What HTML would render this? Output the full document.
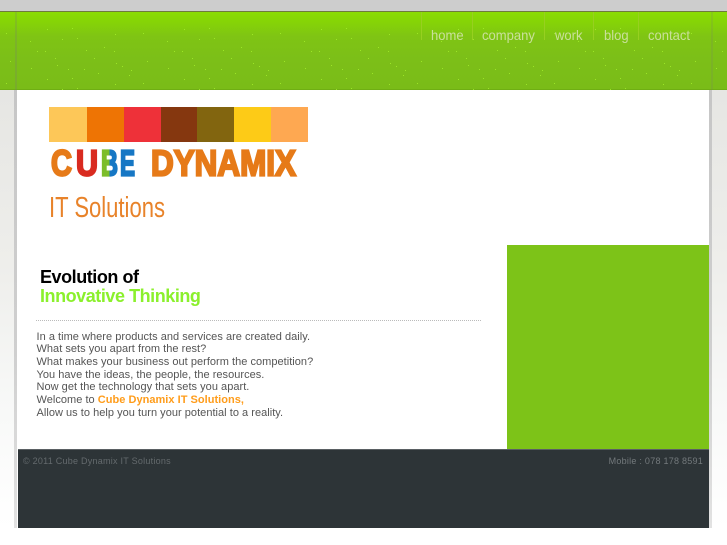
<!DOCTYPE html>
<html><head><meta charset="utf-8">
<style>
html,body{margin:0;padding:0;width:727px;height:545px;overflow:hidden;background:#fff;font-family:"Liberation Sans",sans-serif}
.a{position:absolute}
#wrap{position:relative;width:727px;height:545px;overflow:hidden}
.t{position:absolute;white-space:nowrap}
.nav{position:absolute;top:27px;font-size:14px;line-height:16px;color:#c9e09a;white-space:nowrap;transform-origin:left top;transform:scaleX(.93)}
.sep{position:absolute;top:12px;width:1px;height:28px;background:#97d020}
#copy{left:36.5px;top:330.5px;font-size:11px;line-height:12.68px;color:#555;letter-spacing:.03px;white-space:nowrap}
</style></head><body><div id="wrap">
<div class="a" style="left:0;top:90px;width:15px;height:438px;background:linear-gradient(180deg,#e6e6e3 0%,#eeeeeb 40%,#f7f8f7 70%,#fff 100%)"></div>
<div class="a" style="left:712px;top:90px;width:15px;height:438px;background:linear-gradient(180deg,#e6e6e3 0%,#eeeeeb 40%,#f7f8f7 70%,#fff 100%)"></div>
<div class="a" style="left:14px;top:90px;width:3px;height:438px;background:linear-gradient(180deg,#c6c6c6,#cfcfcf 60%,#e2e2e2)"></div>
<div class="a" style="left:709px;top:90px;width:3px;height:438px;background:linear-gradient(180deg,#c6c6c6,#cfcfcf 60%,#e2e2e2)"></div>

<div class="a" style="left:0;top:0;width:727px;height:11px;background:#cdcdcd"></div>
<div class="a" style="left:0;top:11px;width:727px;height:1px;background:#6f7a3e"></div>
<div class="a" style="left:0;top:12px;width:727px;height:78px;background:linear-gradient(180deg,#8bdc03 0%,#86d406 12%,#7fc414 32%,#7cbf18 60%,#7abc18 100%)"></div>
<div class="a" style="left:0;top:89px;width:727px;height:1px;background:#6fae14"></div>
<svg class="a" style="left:0;top:12px" width="727" height="78">
<defs><pattern id="p" width="137" height="50" patternUnits="userSpaceOnUse" y="26">
<g fill="#a4f02a" fill-opacity=".8">
<rect x="30" y="3" width="1" height="1"/><rect x="62" y="1" width="1" height="1"/><rect x="77" y="0" width="1" height="1"/><rect x="37" y="13" width="1" height="1"/><rect x="45" y="13" width="1" height="1"/><rect x="86" y="12" width="1" height="1"/><rect x="104" y="9" width="1" height="1"/><rect x="114" y="13" width="1" height="1"/><rect x="55" y="20" width="1" height="1"/><rect x="94" y="20" width="1" height="1"/><rect x="10" y="23" width="1" height="1"/><rect x="57" y="27" width="1" height="1"/><rect x="31" y="30" width="1" height="1"/><rect x="68" y="31" width="1" height="1"/><rect x="84" y="31" width="1" height="1"/><rect x="122" y="28" width="1" height="1"/><rect x="116" y="25" width="1" height="1"/><rect x="131" y="32" width="1" height="1"/><rect x="6" y="45" width="1" height="1"/><rect x="47" y="41" width="1" height="1"/><rect x="72" y="40" width="1" height="1"/><rect x="115" y="46" width="1" height="1"/><rect x="129" y="37" width="1" height="1"/><rect x="98" y="35" width="1" height="1"/>
</g></pattern></defs>
<rect x="0" y="14" width="727" height="64" fill="url(#p)"/>
</svg>
<div class="a" style="left:15px;top:12px;width:2px;height:78px;background:rgba(120,120,120,.22)"></div>
<div class="a" style="left:711px;top:12px;width:2px;height:78px;background:rgba(120,120,120,.16)"></div>

<div class="sep" style="left:421px"></div><div class="sep" style="left:472px"></div><div class="sep" style="left:544px"></div><div class="sep" style="left:593px"></div><div class="sep" style="left:638px"></div>
<div class="nav" style="left:431px">home</div>
<div class="nav" style="left:481.5px">company</div>
<div class="nav" style="left:555px">work</div>
<div class="nav" style="left:604px">blog</div>
<div class="nav" style="left:647.5px">contact</div>

<svg class="a" style="left:49px;top:107px" width="260" height="115">
<defs><linearGradient id="b" x1="0" x2="1" y1="0" y2="0"><stop offset=".5" stop-color="#7cbd2a"/><stop offset=".5" stop-color="#1677c4"/></linearGradient></defs>
<rect x="0" width="38" height="35" fill="#fdc758"/><rect x="38" width="37" height="35" fill="#ee7404"/><rect x="75" width="37" height="35" fill="#ee3139"/><rect x="112" width="36" height="35" fill="#85370f"/><rect x="148" width="37" height="35" fill="#82650f"/><rect x="185" width="37" height="35" fill="#fdcb17"/><rect x="222" width="37" height="35" fill="#fea851"/>
<g font-family="'Liberation Sans',sans-serif" font-weight="700" font-size="36" stroke-width="2.2">
<text x="2" y="68.5" textLength="21" lengthAdjust="spacingAndGlyphs" fill="#e67a18" stroke="#e67a18">C</text>
<text x="27" y="68.5" textLength="22" lengthAdjust="spacingAndGlyphs" fill="#d92b20" stroke="#d92b20">U</text>
<text x="52" y="68.5" textLength="17" lengthAdjust="spacingAndGlyphs" fill="url(#b)" stroke="url(#b)">B</text>
<text x="71" y="68.5" textLength="15" lengthAdjust="spacingAndGlyphs" fill="#1677c4" stroke="#1677c4">E</text>
<text x="102" y="68.5" textLength="145" lengthAdjust="spacingAndGlyphs" fill="#e67a18" stroke="#e67a18">DYNAMIX</text>
</g>
<text x="0" y="110" font-family="'Liberation Sans',sans-serif" font-size="29" textLength="116" lengthAdjust="spacingAndGlyphs" fill="#e8832a">IT Solutions</text>
</svg>

<div class="t" style="left:40px;top:267px;font-size:18px;line-height:20px;font-weight:700;color:#000;letter-spacing:-.45px">Evolution of</div>
<div class="t" style="left:40px;top:286px;font-size:18px;line-height:20px;font-weight:700;color:#8bf02c;letter-spacing:-.45px">Innovative Thinking</div>
<div class="a" style="left:36px;top:320px;width:445px;height:0;border-top:1px dotted #bbb"></div>
<div class="a" id="copy">In a time where products and services are created daily.<br>What sets you apart from the rest?<br>What makes your business out perform the competition?<br>You have the ideas, the people, the resources.<br>Now get the technology that sets you apart.<br>Welcome to <b style="color:#ff9c1a">Cube Dynamix IT Solutions,</b><br>Allow us to help you turn your potential to a reality.</div>

<div class="a" style="left:507px;top:245px;width:202px;height:204px;background:#7dc318"></div>
<div class="a" style="left:18px;top:449px;width:691px;height:79px;background:#2d3437;border-top:1px solid #5a6063;box-sizing:border-box"></div>
<div class="t" style="left:23px;top:454.5px;font-size:9px;line-height:12px;letter-spacing:.25px;color:#646a6d">© 2011 Cube Dynamix IT Solutions</div>
<div class="t" style="right:24px;top:454.5px;font-size:9px;line-height:12px;letter-spacing:.25px;color:#73797c">Mobile : 078 178 8591</div>
</div></body></html>
